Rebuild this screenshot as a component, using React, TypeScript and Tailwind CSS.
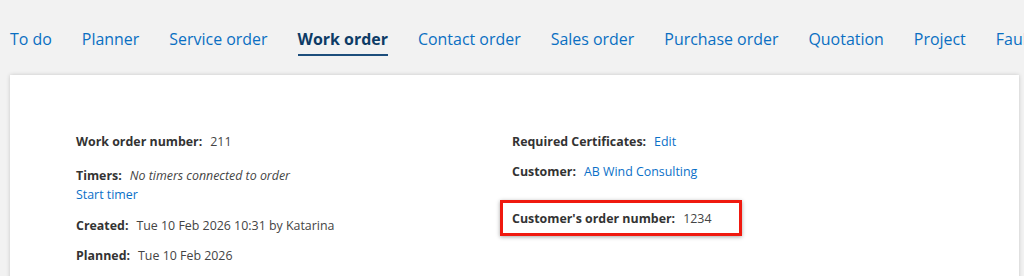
import {FC, ReactNode} from 'react';

const tabs = ['To do', 'Planner', 'Service order', 'Work order', 'Contact order', 'Sales order', 'Purchase order', 'Quotation', 'Project', 'Fault report'];
const ACTIVE = 'Work order';

const Field: FC<{label: string; children: ReactNode; className?: string}> = ({label, children, className = ''}) => (
    <div className={`leading-[19px] ${className}`}>
        <span className="font-bold text-[#333333]">{label}:</span>
        <span className="ml-2 text-[#444444]">{children}</span>
    </div>
);

export default function App() {
    return (
        <div
            className="h-[276px] w-[1024px] overflow-hidden bg-[#f2f2f2]"
            style={{fontFamily: '"Open Sans", "Liberation Sans", sans-serif'}}
        >
            {/* tabs */}
            <nav className="flex gap-[30px] whitespace-nowrap pl-[10px] pt-[27px] text-[15.95px]">
                {tabs.map((t) => (
                    <a
                        key={t}
                        className={`border-b-2 pb-[3px] leading-[24px] ${
                            t === ACTIVE
                                ? 'border-[#1d4e7c] font-bold text-[#0d3b66]'
                                : 'border-transparent text-[#0a6fc2]'
                        }`}
                    >
                        {t}
                    </a>
                ))}
            </nav>

            <div className="ml-[10px] mr-[5px] mt-[19px] h-[220px] bg-white pl-[66px] pt-[57px] text-[12.4px] shadow-[0_0_4px_rgba(0,0,0,0.18)]">
                <div className="flex">
                    {/* left column */}
                    <div className="w-[436px]">
                        <Field label="Work order number">211</Field>
                        <Field label="Timers" className="mt-[15px]">
                            <i>No timers connected to order</i>
                        </Field>
                        <a className="block leading-[19px] text-[#0a70c8]">Start timer</a>
                        <Field label="Created" className="mt-[12px]">Tue 10 Feb 2026 10:31 by Katarina</Field>
                        <Field label="Planned" className="mt-[11px]">Tue 10 Feb 2026</Field>
                    </div>

                    {/* right column */}
                    <div>
                        <Field label="Required Certificates">
                            <a className="text-[#0a70c8]">Edit</a>
                        </Field>
                        <Field label="Customer" className="mt-[11px]">
                            <a className="text-[#0a70c8]">AB Wind Consulting</a>
                        </Field>
                        <div className="-ml-[12px] mt-[19px] w-[242px] border-[3px] border-[#f0190f] pb-[5px] pl-[9px] pt-[6px] shadow-[0_1px_4px_rgba(0,0,0,0.35)]">
                            <Field label="Customer's order number">1234</Field>
                        </div>
                    </div>
                </div>
            </div>
        </div>
    );
}
